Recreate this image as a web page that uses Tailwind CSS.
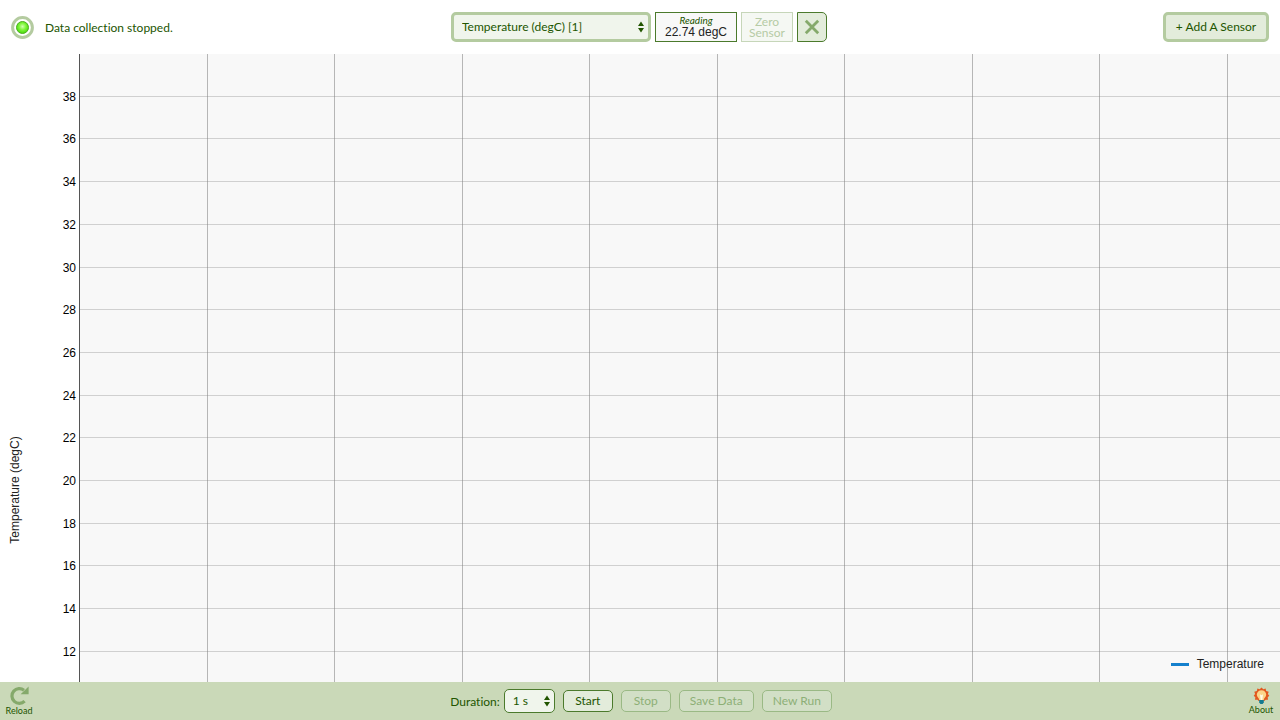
<!DOCTYPE html>
<html lang="en">
<head>
<meta charset="utf-8">
<meta name="viewport" content="width=device-width, initial-scale=1">
<title>Sensor Data</title>
<script src="https://cdn.jsdelivr.net/npm/@tailwindcss/browser@4"></script>
</head>
<body class="flex h-screen flex-col overflow-hidden bg-white font-['Lato',sans-serif] text-xs text-[#225500] [font-variant-ligatures:none]">

<header class="grid h-[54px] shrink-0 grid-cols-[1fr_auto_1fr] items-center px-[11px]">
  <div class="flex items-center gap-[11px]">
    <svg class="size-[23px]" viewBox="0 0 23 23" aria-hidden="true">
      <defs>
        <radialGradient id="led" cx="50%" cy="42%" r="58%">
          <stop offset="0" stop-color="#d2ffb0"/>
          <stop offset="0.5" stop-color="#7df53a"/>
          <stop offset="1" stop-color="#44d808"/>
        </radialGradient>
      </defs>
      <circle cx="11.5" cy="11.5" r="9.9" fill="#fff" stroke="#b4cba0" stroke-width="3"/>
      <circle cx="11.5" cy="11.5" r="6" fill="url(#led)" stroke="#4fae22" stroke-width="1"/>
    </svg>
    <p role="status" class="pt-0.5">Data collection stopped.</p>
  </div>

  <div class="flex items-center gap-1 pr-0.5">
    <div class="relative">
      <select aria-label="Sensor" class="block h-[30px] w-[200px] appearance-none rounded-[5px] border-3 border-[#b4cba0] bg-[#f0f5ec] pl-2 pr-5 text-xs">
        <option>Temperature (degC) [1]</option>
      </select>
      <svg class="pointer-events-none absolute right-[7px] top-[9px] h-3 w-1.5" viewBox="0 0 6 12" fill="#225500" aria-hidden="true"><path d="M3 0.5 6 5H0ZM3 11.5 0 7H6Z"/></svg>
    </div>
    <div class="flex h-[30px] w-[82px] flex-col items-center justify-center border border-[#4b7a2c] bg-[#f8f8f8]">
      <span class="text-[10px] leading-[11px] italic">Reading</span>
      <span class="font-['Liberation_Sans',Arial,sans-serif] text-xs leading-[13px] text-[#222]">22.74 degC</span>
    </div>
    <button disabled class="h-[30px] w-[52px] border border-[#c6d6b9] bg-[#f5f8f3] text-xs leading-[11px] text-[#b6cba5]">Zero<br>Sensor</button>
    <button aria-label="Remove sensor" class="flex size-[30px] items-center justify-center rounded-r-[5px] border border-[#4b7a2c] bg-[#e3ecdb]">
      <svg class="size-4" viewBox="0 0 16 16" fill="none" stroke="#85a96b" stroke-width="2.8" aria-hidden="true"><path d="M1.8 1.8 14.2 14.2M14.2 1.8 1.8 14.2"/></svg>
    </button>
  </div>

  <button class="h-[30px] w-[106px] justify-self-end rounded-[5px] border-3 border-[#b4cba0] bg-[#e3ecdb]">+ Add A Sensor</button>
</header>

<main class="relative min-h-0 flex-1 overflow-hidden font-['Liberation_Sans',Arial,sans-serif]">
  <svg class="block h-full w-full" role="img" aria-label="Temperature graph">
    <rect x="80" y="0" width="100%" height="100%" fill="#f8f8f8"/>
    <g stroke="#d0d0d0">
      <line x1="80" x2="100%" y1="42.5" y2="42.5"/>
      <line x1="80" x2="100%" y1="84.5" y2="84.5"/>
      <line x1="80" x2="100%" y1="127.5" y2="127.5"/>
      <line x1="80" x2="100%" y1="170.5" y2="170.5"/>
      <line x1="80" x2="100%" y1="213.5" y2="213.5"/>
      <line x1="80" x2="100%" y1="255.5" y2="255.5"/>
      <line x1="80" x2="100%" y1="298.5" y2="298.5"/>
      <line x1="80" x2="100%" y1="341.5" y2="341.5"/>
      <line x1="80" x2="100%" y1="383.5" y2="383.5"/>
      <line x1="80" x2="100%" y1="426.5" y2="426.5"/>
      <line x1="80" x2="100%" y1="469.5" y2="469.5"/>
      <line x1="80" x2="100%" y1="511.5" y2="511.5"/>
      <line x1="80" x2="100%" y1="554.5" y2="554.5"/>
      <line x1="80" x2="100%" y1="597.5" y2="597.5"/>
    </g>
    <g stroke="#808080" stroke-opacity="0.55">
      <line x1="207.5" x2="207.5" y1="0" y2="100%"/>
      <line x1="334.5" x2="334.5" y1="0" y2="100%"/>
      <line x1="462.5" x2="462.5" y1="0" y2="100%"/>
      <line x1="589.5" x2="589.5" y1="0" y2="100%"/>
      <line x1="717.5" x2="717.5" y1="0" y2="100%"/>
      <line x1="844.5" x2="844.5" y1="0" y2="100%"/>
      <line x1="972.5" x2="972.5" y1="0" y2="100%"/>
      <line x1="1099.5" x2="1099.5" y1="0" y2="100%"/>
      <line x1="1227.5" x2="1227.5" y1="0" y2="100%"/>
    </g>
    <line x1="79.5" x2="79.5" y1="0" y2="100%" stroke="#555"/>
    <g font-size="12" text-anchor="end" fill="#000">
      <text x="76" y="47">38</text>
      <text x="76" y="89">36</text>
      <text x="76" y="132">34</text>
      <text x="76" y="175">32</text>
      <text x="76" y="218">30</text>
      <text x="76" y="260">28</text>
      <text x="76" y="303">26</text>
      <text x="76" y="346">24</text>
      <text x="76" y="388">22</text>
      <text x="76" y="431">20</text>
      <text x="76" y="474">18</text>
      <text x="76" y="516">16</text>
      <text x="76" y="559">14</text>
      <text x="76" y="602">12</text>
    </g>
    <text transform="translate(19 436) rotate(-90)" font-size="12" text-anchor="middle" fill="#222">Temperature (degC)</text>
  </svg>
  <div class="absolute bottom-2.5 right-4 flex items-center gap-2 text-xs text-[#222]">
    <span class="h-[3px] w-[18px] bg-[#1580cd]"></span>Temperature
  </div>
</main>

<footer class="grid h-[38px] shrink-0 grid-cols-[1fr_auto_1fr] items-center bg-[#cad9b8] px-1">
  <button class="flex w-[30px] flex-col items-center text-[9px] leading-[11px]">
    <svg class="size-[19px]" viewBox="0 0 19 19" aria-hidden="true">
      <path d="M14.6 15.2A7.4 7.4 0 1 1 14 4.2" fill="none" stroke="#85a96b" stroke-width="3.2"/>
      <path d="M18.6 0.6V8.2H10.6Z" fill="#85a96b"/>
    </svg>
    Reload
  </button>

  <div class="flex items-center gap-2 pl-0.5">
    <div class="flex items-center gap-1">
      <label for="duration" class="pt-0.5">Duration:</label>
      <div class="relative">
        <select id="duration" class="block h-6 w-[51px] appearance-none rounded-[5px] border border-[#4b7a2c] bg-[#f0f5ec] pl-2 pr-4 text-xs">
          <option>1 s</option>
        </select>
        <svg class="pointer-events-none absolute right-[5px] top-1.5 h-3 w-1.5" viewBox="0 0 6 12" fill="#225500" aria-hidden="true"><path d="M3 0.5 6 5H0ZM3 11.5 0 7H6Z"/></svg>
      </div>
    </div>
    <button class="h-[22px] w-[50px] rounded-[5px] border border-[#4b7a2c] bg-[#e3ecdb]">Start</button>
    <button disabled class="h-[22px] w-[50px] rounded-[5px] border border-[#9ab985] bg-[#d2dfc6] text-[#8daf76]">Stop</button>
    <button disabled class="h-[22px] w-[75px] rounded-[5px] border border-[#9ab985] bg-[#d2dfc6] text-[#8daf76]">Save Data</button>
    <button disabled class="h-[22px] w-[70px] rounded-[5px] border border-[#9ab985] bg-[#d2dfc6] text-[#8daf76]">New Run</button>
  </div>

  <button class="flex w-[30px] flex-col items-center justify-self-end text-[9px] leading-[11px]">
    <svg class="size-[17px]" viewBox="0 0 17 17" aria-hidden="true">
      <path d="M8.5 0.5 10.3 2.3 12.6 1.6 13.2 4 15.7 4.7 14.9 7 16.3 8.7 14.7 10.3 15 12.7 12.5 12.8 11.3 14H5.7L4.5 12.8 2 12.7 2.3 10.3 0.7 8.7 2.1 7 1.3 4.7 3.8 4 4.4 1.6 6.7 2.3Z" fill="#e2581f"/>
      <path d="M8.5 3.2a4.7 4.7 0 0 0-4.7 4.6c0 2.5 2.4 3.2 2.6 5.7h4.2c.2-2.5 2.6-3.2 2.6-5.7a4.7 4.7 0 0 0-4.7-4.6Z" fill="#fbd58a"/>
      <path d="M7 7.2 8.5 8.2 10 7.2 9.3 13H7.7Z" fill="#fffbe8"/>
      <path d="M6.2 13h4.6v2.4L9.6 17H7.4L6.2 15.4Z" fill="#137b91"/>
    </svg>
    About
  </button>
</footer>
</body>
</html>
